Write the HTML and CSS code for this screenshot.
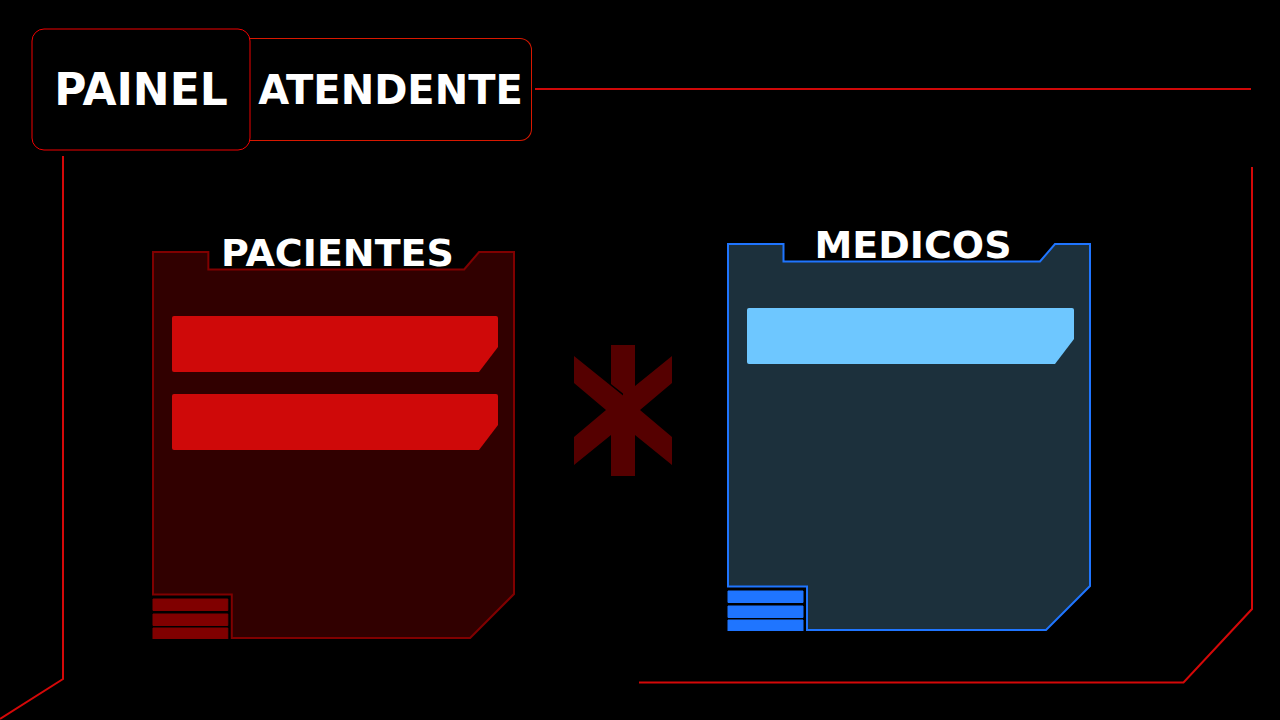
FILE: index.html
```html
<!DOCTYPE html>
<html lang="pt-BR">
<head>
<meta charset="utf-8">
<meta name="viewport" content="width=device-width, initial-scale=1">
<title>Painel Atendente</title>
<link rel="stylesheet" href="styles.css">
</head>
<body>
<div class="page">
  <svg class="page-frame" viewBox="0 0 1280 720" preserveAspectRatio="none" aria-hidden="true">
    <path d="M63 156V679L0 719"/>
    <path d="M1252 167V609L1183.500 682.500H639"/>
  </svg>

  <header class="header">
    <h1 class="heading">
      <span class="tab tab-main">
        <svg class="tab-outline" aria-hidden="true"><rect x="1" y="1" rx="12"/></svg>
        <span class="tab-text">PAINEL</span>
      </span>
      <span class="tab tab-role">ATENDENTE</span>
    </h1>
    <div class="header-rule"></div>
  </header>

  <main class="board">
    <section class="panel panel-red" aria-labelledby="pacientes">
      <svg class="panel-shape" viewBox="0 0 364 388" preserveAspectRatio="none" aria-hidden="true">
        <path class="outline" d="M1 1H56.500V18.500H313L328 1H363V343L319 387H80V343.500H1Z"/>
        <path class="stripe" d="M1 348H76V359.500H1ZM1 363H76V374.500H1ZM1 377H76V388H1Z"/>
      </svg>
      <h2 class="panel-title" id="pacientes">PACIENTES</h2>
      <ul class="items">
        <li class="item"></li>
        <li class="item"></li>
      </ul>
    </section>

    <div class="divider">
      <svg class="asterisk" viewBox="0 0 99 132" aria-hidden="true">
        <path d="M37 0H61V41L98 11V38L66 65L98 92V120L61 90V131H37V90L0 120V92L32 65L0 38V11L49 50.500V48.500L37 39Z"/>
      </svg>
    </div>

    <section class="panel panel-blue" aria-labelledby="medicos">
      <svg class="panel-shape" viewBox="0 0 364 388" preserveAspectRatio="none" aria-hidden="true">
        <path class="outline" d="M1 1H56.500V18.500H313L328 1H363V343L319 387H80V343.500H1Z"/>
        <path class="stripe" d="M1 348H76V359.500H1ZM1 363H76V374.500H1ZM1 377H76V388H1Z"/>
      </svg>
      <h2 class="panel-title" id="medicos">MEDICOS</h2>
      <ul class="items">
        <li class="item"></li>
      </ul>
    </section>
  </main>
</div>
</body>
</html>
```

FILE: styles.css
```css
* {
  box-sizing: border-box;
}

body {
  margin: 0;
  background: #000;
  color: #fff;
  font-family: "DejaVu Sans", Verdana, sans-serif;
}

.page {
  position: relative;
  display: flex;
  flex-direction: column;
  min-height: 100vh;
}

.page-frame {
  position: absolute;
  inset: 0;
  width: 100%;
  height: 100%;
  pointer-events: none;
}

.page-frame path {
  fill: none;
  stroke: #d40808;
  stroke-width: 2px;
  vector-effect: non-scaling-stroke;
}

.header {
  display: flex;
  align-items: center;
  padding: 28px 29px 0 31px;
}

.heading {
  display: flex;
  align-items: center;
  margin: 0;
  font-weight: 700;
}

.tab {
  display: flex;
  align-items: center;
  justify-content: center;
}

.tab-main {
  position: relative;
  width: 220px;
  height: 123px;
  font-size: 44px;
}

.tab-outline {
  position: absolute;
  inset: 0;
  width: 100%;
  height: 100%;
}

.tab-outline rect {
  width: calc(100% - 2px);
  height: calc(100% - 2px);
  fill: none;
  stroke: #f00000;
  stroke-width: 1px;
}

.tab-role {
  width: 282px;
  height: 103px;
  margin-left: -1px;
  border: 1px solid #d81800;
  border-left: 0;
  border-radius: 0 12px 12px 0;
  font-size: 40px;
}

.header-rule {
  flex: 1;
  height: 2px;
  margin: 0 0 2px 3px;
  background: #cf0808;
}

.board {
  flex: 1;
  display: grid;
  grid-template-columns: 363fr 212fr 364fr;
  padding: 73px 189px 81px 152px;
}

.panel {
  position: relative;
}

.panel-red {
  --line: #800000;
  --fill: #310000;
  --item: #cf0909;
  margin-top: 8px;
}

.panel-blue {
  --line: #1f75ff;
  --fill: #1c303c;
  --item: #6ec7ff;
  margin-bottom: 8px;
}

.panel-shape {
  position: absolute;
  inset: 19px 0 0;
  width: 100%;
  height: calc(100% - 19px);
}

.outline {
  fill: var(--fill);
  stroke: var(--line);
  stroke-width: 2px;
  vector-effect: non-scaling-stroke;
}

.stripe {
  fill: var(--line);
  stroke: var(--line);
  stroke-width: 1px;
  stroke-linejoin: round;
}

.panel-title {
  position: relative;
  margin: 0;
  padding-left: 8px;
  font-size: 38px;
  line-height: 42px;
  text-align: center;
}

.items {
  position: relative;
  display: flex;
  flex-direction: column;
  gap: 22px;
  margin: 42px 17px 64px 20px;
  padding: 0;
  list-style: none;
}

.item {
  height: 56px;
  border-radius: 2px;
  background: var(--item);
  clip-path: polygon(0 0, 100% 0, 100% 31px, calc(100% - 19px) 100%, 0 100%);
}

.divider {
  display: flex;
  align-items: center;
  justify-content: center;
  padding: 0 0 41px 5px;
}

.asterisk {
  width: 99px;
  height: 132px;
  fill: #550000;
}
```
